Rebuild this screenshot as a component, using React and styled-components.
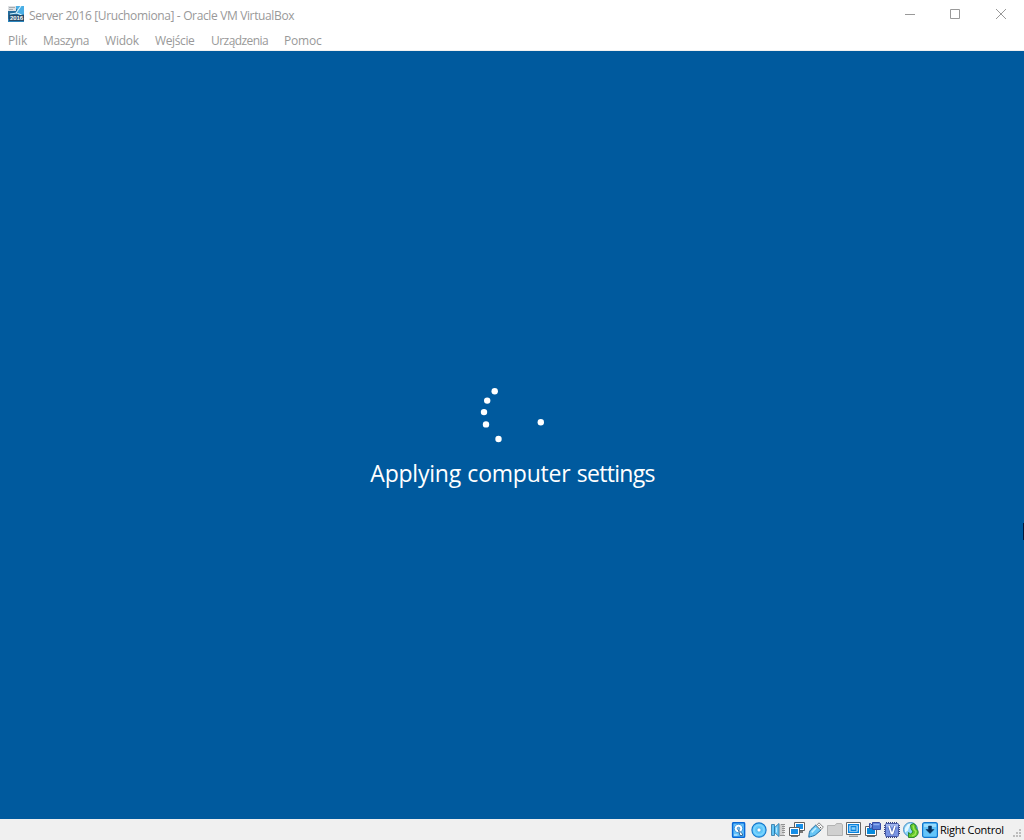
import React from 'react';
import styled, { createGlobalStyle } from 'styled-components';

const GlobalStyle = createGlobalStyle`
  * { box-sizing: border-box; }
  body { margin: 0; overflow: hidden; }
`;

const Window = styled.div`
  position: relative;
  display: flex;
  flex-direction: column;
  width: 1024px;
  height: 840px;
  background: #fff;
  font-family: 'Open Sans', 'Noto Sans', sans-serif;
`;

const TitleBar = styled.header`
  display: flex;
  align-items: center;
  height: 30px;
  padding-left: 8px;
`;

const AppIcon = styled.svg`
  width: 16px;
  height: 16px;
  margin: -3px 5px 0 0;
  flex: none;
`;

const Title = styled.span`
  flex: 1;
  padding-top: 1px;
  color: #999;
  font-size: 12px;
  line-height: 30px;
  letter-spacing: -0.36px;
  white-space: pre;
`;

const Controls = styled.div`
  display: flex;
  height: 30px;
`;

const Control = styled.button`
  display: flex;
  align-items: center;
  justify-content: center;
  width: ${(p) => p.$width || 45}px;
  height: 28px;
  padding: 0;
  border: 0;
  background: transparent;
`;

const MenuBar = styled.nav`
  display: flex;
  gap: 16px;
  height: 21px;
  padding-left: 8px;
  border-bottom: 1px solid #f0f0f0;
`;

const MenuItem = styled.span`
  width: ${(p) => p.$width}px;
  color: #999;
  font-size: 12px;
  line-height: 22px;
  letter-spacing: ${(p) => p.$tracking || 0}px;
  white-space: nowrap;
`;

const Screen = styled.main`
  display: flex;
  flex-direction: column;
  align-items: center;
  height: 768px;
  padding-top: 333px;
  background: #005a9e;
`;

const Spinner = styled.svg`
  width: 72px;
  height: 64px;
`;

const Message = styled.p`
  margin: 6px 0 0 1px;
  color: #fff;
  font-size: 23px;
  font-weight: 400;
  line-height: 38px;
  letter-spacing: -0.22px;
  word-spacing: 0.6px;
  white-space: nowrap;
`;

const TightWord = styled.span`
  letter-spacing: -0.72px;
`;

const Pointer = styled.div`
  position: absolute;
  right: 0;
  top: 523px;
  width: 1px;
  height: 17px;
  background: #00193e;
`;

const StatusBar = styled.footer`
  display: flex;
  align-items: center;
  justify-content: flex-end;
  height: 21px;
  background: #f0f0f0;
`;

const Indicators = styled.div`
  display: flex;
  gap: 3px;
  padding-top: 1px;
`;

const StatusIcon = styled.svg`
  display: block;
  width: 16px;
  height: 16px;
  margin-right: ${(p) => p.$after || 0}px;
`;

const HostKey = styled.span`
  width: 65px;
  margin: 1px 8px 0 2px;
  color: #000;
  font-size: 11px;
  line-height: 20px;
  letter-spacing: -0.26px;
  white-space: nowrap;
`;

const Grip = styled.svg`
  width: 11px;
  height: 11px;
  align-self: flex-end;
`;

const MENU = [
  ['Plik', 19, -0.1],
  ['Maszyna', 46, -0.4],
  ['Widok', 34, -0.2],
  ['Wejście', 40, -0.38],
  ['Urządzenia', 57, -0.55],
  ['Pomoc', 38, -0.2],
];

const DOTS = [
  [494.7, 391.3],
  [487.2, 400.6],
  [484, 412.1],
  [486, 424.4],
  [498.5, 439],
  [540.8, 422.2],
];

function HardDisk() {
  return (
    <StatusIcon viewBox="0 0 16 16" $after={1}>
      <rect x="1.6" y=".7" width="12" height="14.6" rx="1" fill="#63c1fa" stroke="#0868d8" strokeWidth="1.5" />
      <circle cx="7.5" cy="6.5" r="4.2" fill="#fff" stroke="#258ada" strokeWidth=".8" />
      <circle cx="7.5" cy="6.5" r="1.3" fill="#79bdf0" stroke="#2779bd" strokeWidth=".7" />
      <path d="M7.5 8l4 4v1.5H9z" fill="#fff" stroke="#235d94" strokeWidth=".9" />
      <path d="M3 13h3.5" stroke="#e4f6ff" />
    </StatusIcon>
  );
}

function Disc() {
  return (
    <StatusIcon viewBox="0 0 16 16">
      <circle cx="8" cy="8" r="7.1" fill="#5ec7fa" stroke="#1175cb" strokeWidth="1.1" />
      <circle cx="8" cy="8" r="4.9" fill="none" stroke="#7cd4fe" strokeWidth="1.8" />
      <circle cx="8" cy="8" r="2" fill="#fff" stroke="#3b9edb" strokeWidth=".6" />
    </StatusIcon>
  );
}

function Audio() {
  return (
    <StatusIcon viewBox="0 0 16 16">
      <path d="M9 2h5v12H9z" fill="#d0d0d0" />
      <path d="M11 2.5h4M12 4.5h3M12 6.5h3M12 8.5h3M12 10.5h3M10 13.5h5" stroke="#929292" />
      <path d="M1.5 2.5h3v2h1l3.5-3v13l-3.5-3h-1v2h-3z" fill="#62c3f5" stroke="#397fac" strokeWidth=".9" />
      <path d="M4.5 4.5v7" stroke="#287cad" />
      <path d="M6.5 5.5v5" stroke="#b6e7fd" />
    </StatusIcon>
  );
}

function Network() {
  return (
    <StatusIcon viewBox="0 0 16 16">
      <path d="M5.5.5h10v8h-10z" fill="#fff" stroke="#606060" />
      <path d="M7 2h7v5H7z" fill="#168ee7" />
      <path d="M11 9h3v2h-3z" fill="#777" />
      <path d="M.5 5.5h10v8H.5z" fill="#fff" stroke="#606060" />
      <path d="M2 7h7v5H2z" fill="#168ee7" />
      <path d="M2 14.5h7" stroke="#777" />
    </StatusIcon>
  );
}

function Usb() {
  return (
    <StatusIcon viewBox="0 0 16 16">
      <path d="M.8 15.2C1 11.5 1.3 9.2 3 7.5L7.8 3l5.2 5-5.3 4.7C5.8 14.3 3.2 14.3.8 15.2z" fill="#67c5f5" stroke="#216da3" />
      <path d="M8.3 3.6L11 .8l4.4 4.4-2.8 2.7z" fill="#f7f7f7" stroke="#777" strokeWidth=".9" />
      <path d="M3.7 10.3L8 6" stroke="#bceeff" strokeWidth="1.7" />
      <path d="M10.5 3.5h1M12 5.5h1" stroke="#555" fill="none" />
    </StatusIcon>
  );
}

function Folder() {
  return (
    <StatusIcon viewBox="0 0 16 16">
      <path d="M.5 3.5H8l1.5-2h5l1 1.5v10.5H.5z" fill="#d0d0d0" stroke="#b2b2b2" />
    </StatusIcon>
  );
}

function Display() {
  return (
    <StatusIcon viewBox="0 0 16 16">
      <path d="M.5.5h14v12H.5z" fill="#fff" stroke="#666" />
      <path d="M2.7 2.7h9.6v7.6H2.7z" fill="#fff" stroke="#0783df" strokeWidth="1.5" />
      <path d="M5 4.7h5v3.6H5z" fill="#8cd0fa" stroke="#0783df" strokeWidth="1.2" />
      <path d="M3 14.2h9" stroke="#777" />
    </StatusIcon>
  );
}

function Recording() {
  return (
    <StatusIcon viewBox="0 0 16 16">
      <path d="M.5 4.5h11v9H.5z" fill="#fff" stroke="#606060" />
      <path d="M2 6h8v6H2z" fill="#078bdd" />
      <path d="M2 14.5h8" stroke="#666" />
      <path d="M7.5.5h7l1 1v6h-8z" fill="#5178d3" stroke="#3548a2" />
      <path d="M4.5 1.5h1l2 2v2l-2 1h-1z" fill="#7ea5ee" stroke="#34479c" />
      <path d="M8.5 2.5h6" stroke="#8eacf0" strokeWidth="1.5" />
    </StatusIcon>
  );
}

function Cpu() {
  return (
    <StatusIcon viewBox="0 0 16 16">
      <path d="M2.5 0v16M4.5 0v16M6.5 0v16M8.5 0v16M10.5 0v16M12.5 0v16M0 3.5h16M0 5.5h16M0 7.5h16M0 9.5h16M0 11.5h16" stroke="#35427f" />
      <rect x="1.5" y="1.5" width="13" height="13" rx="1" fill="#7893e2" stroke="#4657a2" />
      <path d="M2 2h12v3H2z" fill="#a0b5ee" />
      <path d="M5 4l2.5 7.5h1L11 4" fill="none" stroke="#4258a8" strokeWidth="2.8" />
      <path d="M5 4l2.5 7.5h1L11 4" fill="none" stroke="#fff" strokeWidth="1.8" />
    </StatusIcon>
  );
}

function MouseIntegration() {
  return (
    <StatusIcon viewBox="0 0 16 16">
      <circle cx="7.5" cy="7.5" r="7" fill="#8bd4fa" stroke="#4d91c4" />
      <path d="M2 6l3-4 3-.5-2 4-1 3-3 2z" fill="#e2f7ff" />
      <path d="M7.5 3l3-1.5 2.5 2v3c3 2 2.5 5 1 7l-3 2H5.5v-5l2 1.5 2.5-2-2-3.5z" fill="#64c92c" stroke="#237e29" strokeWidth=".9" />
      <path d="M10 3.5l1 4 2 2-1 3-3 1.5" stroke="#a1e85d" strokeWidth="1.2" fill="none" />
    </StatusIcon>
  );
}

function HostArrow() {
  return (
    <StatusIcon viewBox="0 0 16 16">
      <rect x=".6" y=".6" width="14.8" height="14.8" rx="2" fill="#63c4fa" stroke="#0f74cd" strokeWidth="1.2" />
      <path d="M2 2h12v3H2z" fill="#98dcff" />
      <path d="M6.5 4h3v3.5H12l-4 4-4-4h2.5z" fill="#062f5c" stroke="#062f5c" strokeWidth=".5" />
    </StatusIcon>
  );
}

export default function App() {
  return (
    <>
      <GlobalStyle />
      <Window>
        <TitleBar>
          <AppIcon viewBox="0 0 16 16">
            <path d="M0 0h16v16H0z" fill="#2c86be" />
            <path d="M7 0h9v8H9z" fill="#4aaee5" />
            <path d="M0 5l9-2 1 6-10 4z" fill="#236b9b" />
            <path d="M8 7l5-7M9 7l7 3M2 8l7-1" stroke="#d8f5ff" strokeWidth="1.1" />
            <path d="M0 0h8v5H0z" fill="#dde0e3" />
            <path d="M1 1.5h6M1 3.5h4" stroke="#a5abb0" />
            <path d="M1 9h15v6H1z" fill="#254b69" />
            <text x="2" y="14.4" fontFamily="Liberation Sans, sans-serif" fontSize="6" fontWeight="700" fill="#fff" textLength="13">2016</text>
          </AppIcon>
          <Title>Server 2016 [Uruchomiona] - Oracle VM VirtualBox</Title>
          <Controls>
            <Control aria-label="Minimize">
              <svg width="10" height="10"><path d="M0 5.5h10" stroke="#999" /></svg>
            </Control>
            <Control aria-label="Maximize">
              <svg width="10" height="10"><path d="M.5.5h9v9h-9z" fill="none" stroke="#999" /></svg>
            </Control>
            <Control aria-label="Close" $width={47}>
              <svg width="10" height="10"><path d="M0 0l10 10M10 0L0 10" stroke="#999" /></svg>
            </Control>
          </Controls>
        </TitleBar>
        <MenuBar>
          {MENU.map(([label, width, tracking]) => (
            <MenuItem key={label} $width={width} $tracking={tracking}>{label}</MenuItem>
          ))}
        </MenuBar>
        <Screen>
          <Spinner viewBox="476 384 72 64">
            {DOTS.map(([x, y]) => <circle key={x} cx={x} cy={y} r="3.2" fill="#fff" />)}
          </Spinner>
          <Message>Applying computer <TightWord>settings</TightWord></Message>
        </Screen>
        <StatusBar>
          <Indicators>
            <HardDisk />
            <Disc />
            <Audio />
            <Network />
            <Usb />
            <Folder />
            <Display />
            <Recording />
            <Cpu />
            <MouseIntegration />
            <HostArrow />
          </Indicators>
          <HostKey>Right Control</HostKey>
          <Grip viewBox="0 0 11 11">
            <path d="M6 0h2v2H6zM3 3h2v2H3zM6 3h2v2H6zM0 6h2v2H0zM3 6h2v2H3zM6 6h2v2H6z" fill="#bdbdbd" />
          </Grip>
        </StatusBar>
        <Pointer />
      </Window>
    </>
  );
}
